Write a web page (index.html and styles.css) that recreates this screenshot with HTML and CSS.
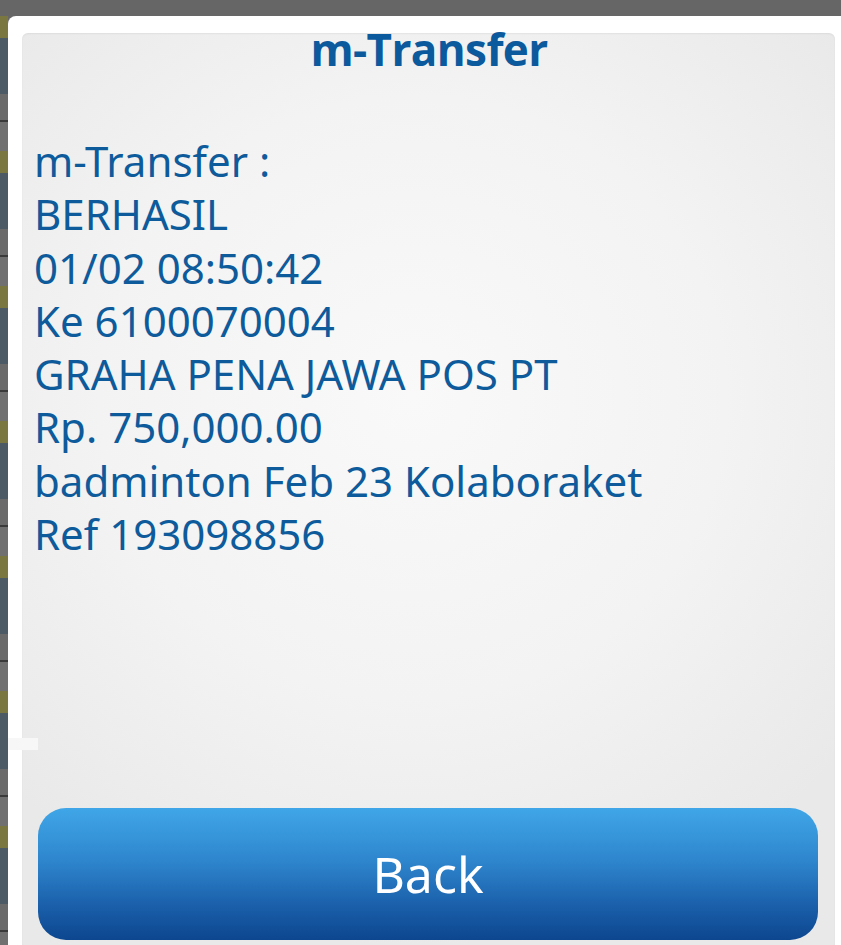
FILE: index.html
```html
<!DOCTYPE html>
<html lang="id">
<head>
<meta charset="utf-8">
<title>m-Transfer</title>
<link rel="stylesheet" href="styles.css">
</head>
<body>
<div class="topbar"></div>
<div class="screen">
  <div class="strip"></div>
  <div class="card">
    <div class="panel">
      <h1 class="title">m-Transfer</h1>
      <div class="message">
        <div class="line">m-Transfer :</div>
        <div class="line">BERHASIL</div>
        <div class="line">01/02 08:50:42</div>
        <div class="line">Ke 6100070004</div>
        <div class="line">GRAHA PENA JAWA POS PT</div>
        <div class="line">Rp. 750,000.00</div>
        <div class="line">badminton Feb 23 Kolaboraket</div>
        <div class="line">Ref 193098856</div>
      </div>
      <div class="spacer"></div>
      <button class="back">Back</button>
    </div>
    <div class="nub"></div>
  </div>
</div>
</body>
</html>
```

FILE: styles.css
```css
html, body {
  margin: 0;
  padding: 0;
  height: 945px;
  overflow: hidden;
  background: #676767;
}

.topbar {
  height: 16px;
  background: #666666;
}

.screen {
  display: flex;
  height: 929px;
}

.strip {
  width: 8px;
  flex: none;
  background:
    repeating-linear-gradient(180deg,
      #7b7740 0px, #7b7740 22px,
      #4c5a66 22px, #4c5a66 78px,
      #6a6a6a 78px, #6a6a6a 104px,
      #3a3a3a 104px, #3a3a3a 106px,
      #707070 106px, #707070 135px);
}

.card {
  position: relative;
  flex: 1;
  background: #ffffff;
  border-top-left-radius: 8px;
  padding: 17px 6px 0 14px;
  display: flex;
}

.panel {
  flex: 1;
  display: flex;
  flex-direction: column;
  border-radius: 6px 6px 0 0;
  background: radial-gradient(ellipse 70% 60% at 48% 40%, #f9f9f9 0%, #f3f3f3 55%, #e9e9e9 100%);
  box-shadow: inset 0 1px 2px rgba(0,0,0,0.06);
  padding: 0 17px 0 12px;
}

.title {
  margin: 0;
  text-align: center;
  font-family: "Open Sans", "Noto Sans", sans-serif;
  font-weight: 700;
  font-size: 44px;
  line-height: 32px;
  color: #0b5a9d;
  letter-spacing: -0.6px;
  padding-left: 6px;
}

.message {
  margin-top: 69px;
  font-family: "Noto Sans", "Open Sans", sans-serif;
  font-size: 42px;
  line-height: 53.3px;
  color: #0e5b9c;
}

.line {
  white-space: nowrap;
}

.spacer {
  flex: 1;
}

.back {
  margin: 0 0 5px 4px;
  height: 132px;
  border: none;
  border-radius: 28px;
  background: linear-gradient(180deg, #40a6e7 0%, #2e86cd 40%, #1a5ea9 75%, #0c468f 100%);
  color: #ffffff;
  font-family: "Noto Sans", "Open Sans", sans-serif;
  font-size: 50px;
  padding: 0;
  cursor: pointer;
}

.nub {
  position: absolute;
  left: 0;
  top: 722px;
  width: 30px;
  height: 12px;
  background: #f7f7f7;
}
```
